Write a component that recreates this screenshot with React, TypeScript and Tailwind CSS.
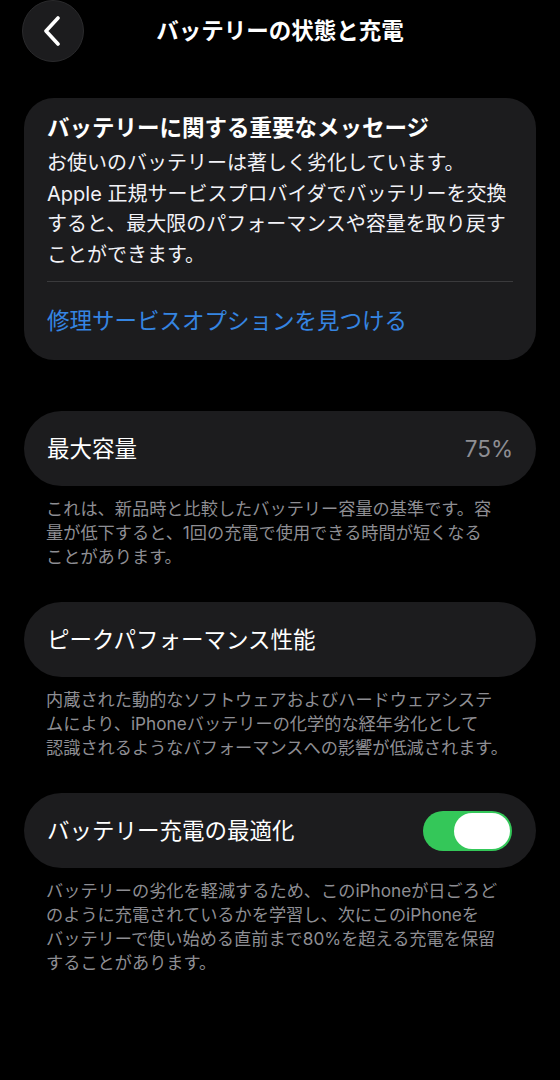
import React from "react";

const Footer = ({ lines }: { lines: string[] }) => (
  <p className="mt-[11px] pl-[22px] pr-[4px] text-[17.2px] leading-[24px] text-[#8e8e93]">
    {lines.map((l, i) => (
      <span key={i} className="block whitespace-nowrap">
        {l}
      </span>
    ))}
  </p>
);

export default function App() {
  return (
    <div className="w-[560px] h-[1080px] bg-black text-white font-[Inter,'Noto_Sans_CJK_JP',sans-serif] overflow-hidden">
      <header className="grid grid-cols-[1fr_auto_1fr] items-center h-[54px]">
        <div className="flex">
          <button className="ml-[22px] w-[62px] h-[62px] shrink-0 rounded-full bg-[#1c1c1e] border border-[#2a2a2c] flex items-center justify-center">
            <svg width="22" height="30" viewBox="0 0 22 30" fill="none">
              <path
                d="M16 2 L4 15 L16 28"
                stroke="white"
                strokeWidth="3.6"
                strokeLinecap="round"
                strokeLinejoin="round"
              />
            </svg>
          </button>
        </div>
        <h1 className="text-[22.5px] font-semibold leading-[30px]">バッテリーの状態と充電</h1>
        <div />
      </header>

      <main className="px-[24px]">
        <section className="mt-[44px] rounded-[30px] bg-[#1c1c1e] pl-[23px] pr-[14px] pt-[16px] pb-[24px]">
          <h2 className="text-[22.5px] font-bold leading-[28px] whitespace-nowrap">バッテリーに関する重要なメッセージ</h2>
          <p className="mt-[6px] text-[20px] leading-[30.5px] text-[#f2f2f7]">
            <span className="block whitespace-nowrap">お使いのバッテリーは著しく劣化しています。</span>
            <span className="block whitespace-nowrap">Apple 正規サービスプロバイダでバッテリーを交換</span>
            <span className="block whitespace-nowrap">すると、最大限のパフォーマンスや容量を取り戻す</span>
            <span className="block whitespace-nowrap">ことができます。</span>
          </p>
          <div className="mt-[11px] mr-[9px] h-px bg-[#3a3a3c]" />
          <p className="mt-[24px] text-[22.5px] leading-[30px] text-[#3585e2] whitespace-nowrap">修理サービスオプションを見つける</p>
        </section>

        <section className="mt-[51px] h-[75px] rounded-full bg-[#1c1c1e] flex items-center justify-between px-[23px]">
          <span className="text-[22.5px]">最大容量</span>
          <span className="text-[22.5px] text-[#8e8e93]">75%</span>
        </section>
        <Footer
          lines={[
            "これは、新品時と比較したバッテリー容量の基準です。容",
            "量が低下すると、1回の充電で使用できる時間が短くなる",
            "ことがあります。",
          ]}
        />

        <section className="mt-[33px] h-[75px] rounded-full bg-[#1c1c1e] flex items-center px-[23px]">
          <span className="text-[22.5px]">ピークパフォーマンス性能</span>
        </section>
        <Footer
          lines={[
            "内蔵された動的なソフトウェアおよびハードウェアシステ",
            "ムにより、iPhoneバッテリーの化学的な経年劣化として",
            "認識されるようなパフォーマンスへの影響が低減されます。",
          ]}
        />

        <section className="mt-[33px] h-[75px] rounded-full bg-[#1c1c1e] flex items-center justify-between pl-[23px] pr-[24px]">
          <span className="text-[22.5px]">バッテリー充電の最適化</span>
          <div className="w-[89px] h-[40px] rounded-full bg-[#34c759] flex items-center justify-end p-[2px]">
            <div className="w-[56px] h-[36px] rounded-full bg-white" />
          </div>
        </section>
        <Footer
          lines={[
            "バッテリーの劣化を軽減するため、このiPhoneが日ごろど",
            "のように充電されているかを学習し、次にこのiPhoneを",
            "バッテリーで使い始める直前まで80%を超える充電を保留",
            "することがあります。",
          ]}
        />
      </main>
    </div>
  );
}
